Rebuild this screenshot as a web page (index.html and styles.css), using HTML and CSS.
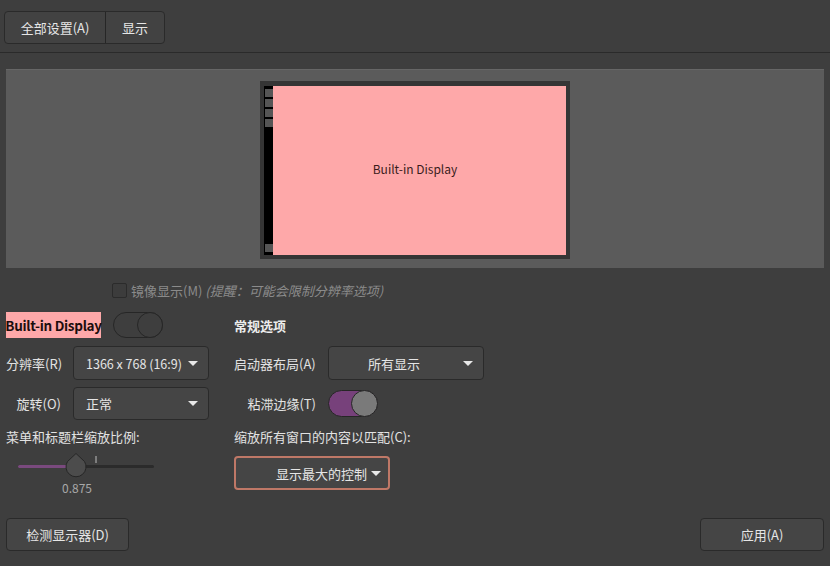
FILE: index.html
```html
<!DOCTYPE html>
<html lang="zh-CN">
<head>
<meta charset="utf-8">
<link rel="stylesheet" href="styles.css">
</head>
<body>
<div class="window">
  <header class="header">
    <div class="btn-group">
      <button class="hbtn hbtn-all">全部设置(A)</button>
      <button class="hbtn hbtn-disp">显示</button>
    </div>
  </header>

  <section class="preview">
    <div class="monitor">
      <div class="strip">
        <span class="sq"></span><span class="sq"></span><span class="sq"></span><span class="sq"></span>
        <span class="strip-fill"></span>
        <span class="sq"></span>
      </div>
      <div class="screen">Built-in Display</div>
    </div>
  </section>

  <div class="mirror-row">
    <span class="checkbox"></span>
    <span class="mirror-text">镜像显示(M) <i>(提醒：可能会限制分辨率选项)</i></span>
  </div>

  <div class="settings">
    <div class="col col-left">
      <div class="row row-title">
        <span class="display-name">Built-in Display</span>
        <span class="switch switch-off"><span class="knob"></span></span>
      </div>
      <div class="row row-combo">
        <span class="label label-l">分辨率(R)</span>
        <div class="combo combo-res"><span class="combo-text tight">1366 x 768 (16:9)</span><span class="arrow"></span></div>
      </div>
      <div class="row row-combo2">
        <span class="label label-l label-right">旋转(O)</span>
        <div class="combo combo-res"><span class="combo-text">正常</span><span class="arrow"></span></div>
      </div>
      <div class="row row-text">
        <span class="label">菜单和标题栏缩放比例:</span>
      </div>
      <div class="slider-wrap">
        <svg class="slider" width="150" height="30" viewBox="0 0 150 30">
          <rect x="1" y="13" width="136" height="3" rx="1.5" fill="#2b2b2b"/>
          <rect x="1" y="13" width="52" height="3" rx="1.5" fill="#7a4a7e"/>
          <line x1="79" y1="4" x2="79" y2="11" stroke="#bdbdbd" stroke-width="1"/>
          <path d="M59 1.5 L67.5 9.5 A10 10 0 1 1 50.5 9.5 Z" fill="#4c4c4c" stroke="#262626" stroke-width="1"/>
        </svg>
        <div class="slider-value">0.875</div>
      </div>
    </div>

    <div class="col col-right">
      <div class="row row-title">
        <span class="section-title">常规选项</span>
      </div>
      <div class="row row-combo">
        <span class="label label-r">启动器布局(A)</span>
        <div class="combo combo-launch"><span class="combo-text centered">所有显示</span><span class="arrow"></span></div>
      </div>
      <div class="row row-combo2">
        <span class="label label-r label-right">粘滞边缘(T)</span>
        <span class="switch switch-on"><span class="knob"></span></span>
      </div>
      <div class="row row-text">
        <span class="label">缩放所有窗口的内容以匹配(C):</span>
      </div>
      <div class="row row-focus">
        <div class="combo combo-focus"><span class="combo-text clipped">显示最大的控制</span><span class="arrow"></span></div>
      </div>
    </div>
  </div>

  <footer class="footer">
    <button class="fbtn fbtn-detect">检测显示器(D)</button>
    <button class="fbtn fbtn-apply">应用(A)</button>
  </footer>
</div>
</body>
</html>
```

FILE: styles.css
```css
* { box-sizing: border-box; }

html, body {
  margin: 0;
  padding: 0;
  background: #3e3e3e;
}

body {
  font-family: "Noto Sans CJK SC", "Noto Sans", sans-serif;
  font-size: 13px;
  color: #e2e2e2;
}

.window {
  width: 830px;
  height: 566px;
  display: flex;
  flex-direction: column;
  overflow: hidden;
}

/* header */
.header {
  height: 53px;
  padding: 11px 0 0 4px;
  border-bottom: 1px solid #2a2a2a;
}

.btn-group {
  display: inline-flex;
  height: 33px;
  border: 1px solid #2a2a2a;
  border-radius: 4px;
  background: #424242;
  overflow: hidden;
}

.hbtn {
  font: inherit;
  color: #e6e6e6;
  background: transparent;
  border: none;
  padding: 0;
  height: 100%;
}

.hbtn-all { width: 101px; border-right: 1px solid #262626; }
.hbtn-disp { width: 58px; }

/* preview */
.preview {
  margin: 16px 6px 0 6px;
  height: 199px;
  background: #5b5b5b;
  border-top: 1px solid #666;
  display: flex;
  justify-content: center;
  padding-top: 11px;
}

.monitor {
  width: 310px;
  height: 178px;
  background: #353535;
  padding: 5px 4px 4px 4px;
  display: flex;
}

.strip {
  width: 9px;
  background: #000;
  display: flex;
  flex-direction: column;
  gap: 2px;
  padding: 3px 0 3px 1px;
}

.sq {
  display: block;
  width: 8px;
  height: 8px;
  background: #555;
}

.strip-fill { flex: 1; }

.screen {
  flex: 1;
  background: #fea8a9;
  color: #3a1c1c;
  font-size: 12px;
  display: flex;
  align-items: center;
  justify-content: center;
  padding: 0 9px 4px 0;
}

/* mirror */
.mirror-row {
  display: flex;
  align-items: center;
  height: 16px;
  margin: 14px 0 0 112px;
  color: #8b8b8b;
}

.checkbox {
  width: 15px;
  height: 15px;
  border: 1px solid #2b2b2b;
  border-radius: 2px;
  background: #3c3c3c;
  margin-right: 4px;
}

.mirror-text i { font-style: italic; }

/* settings grid */
.settings {
  display: flex;
  gap: 25px;
  margin: 14px 0 0 6px;
}

.col { display: flex; flex-direction: column; }
.col-left { width: 203px; }
.col-right { width: 250px; }

.row { display: flex; align-items: center; }

.row-title { height: 26px; }
.row-combo { height: 34px; margin-top: 8px; }
.row-combo2 { height: 33px; margin-top: 7px; }
.row-text { height: 18px; margin-top: 7px; }
.row-focus { height: 34px; margin-top: 11px; }

.display-name {
  background: #fea8a9;
  color: #1c0d0d;
  font-weight: bold;
  height: 26px;
  width: 95px;
  display: flex;
  align-items: center;
  justify-content: center;
  font-size: 13.5px;
  letter-spacing: -0.3px;
  white-space: nowrap;
}

.section-title { font-weight: bold; color: #ececec; }

.switch {
  position: relative;
  display: inline-block;
  width: 50px;
  height: 26px;
  border-radius: 13px;
  border: 1px solid #262626;
}

.row-title .switch { margin-left: 12px; }

.switch .knob {
  position: absolute;
  right: -1px;
  top: -1px;
  width: 26px;
  height: 26px;
  border-radius: 50%;
  border: 1px solid #262626;
}

.switch-off { background: transparent; }
.switch-off .knob { background: #3e3e3e; }

.switch-on {
  background: #77417b;
  height: 27px;
  border-radius: 14px;
}
.switch-on .knob {
  width: 27px;
  height: 27px;
  background: #7a7a7a;
}

.label { white-space: nowrap; }
.label-l { width: 67px; }
.label-r { width: 94px; }
.label-right { text-align: right; padding-right: 12px; }

.combo {
  height: 100%;
  border: 1px solid #2a2a2a;
  border-radius: 4px;
  background: #454545;
  display: flex;
  align-items: center;
  padding: 0 10px 0 12px;
  color: #e6e6e6;
  position: relative;
}

.combo-res { width: 136px; }
.combo-launch { width: 156px; }

.combo-text { flex: 1; white-space: nowrap; overflow: hidden; }
.combo-text.tight { font-size: 12.5px; letter-spacing: 0; overflow: visible; }
.combo-text.centered { text-align: center; padding-right: 12px; }

.arrow {
  width: 0;
  height: 0;
  border-left: 5px solid transparent;
  border-right: 5px solid transparent;
  border-top: 5px solid #e8e8e8;
  margin-left: 4px;
  flex: none;
}

.combo-res .arrow { margin-left: 2px; }

.combo-focus {
  width: 156px;
  border: 2px solid #bf7867;
  padding: 0 9px 0 40px;
}

.combo-text.clipped { overflow: visible; }

/* slider */
.slider-wrap {
  margin-top: 7px;
  padding-left: 11px;
}

.slider { display: block; }

.slider-value {
  width: 140px;
  text-align: center;
  color: #a8a8a8;
  font-size: 12px;
  margin-left: -10px;
  margin-top: -3px;
}

/* footer */
.footer {
  margin-top: auto;
  display: flex;
  justify-content: space-between;
  padding: 0 6px 15px 6px;
}

.fbtn {
  font: inherit;
  color: #e6e6e6;
  background: #454545;
  border: 1px solid #2a2a2a;
  border-radius: 4px;
  height: 33px;
}

.fbtn-detect { width: 123px; }
.fbtn-apply { width: 124px; }
```
